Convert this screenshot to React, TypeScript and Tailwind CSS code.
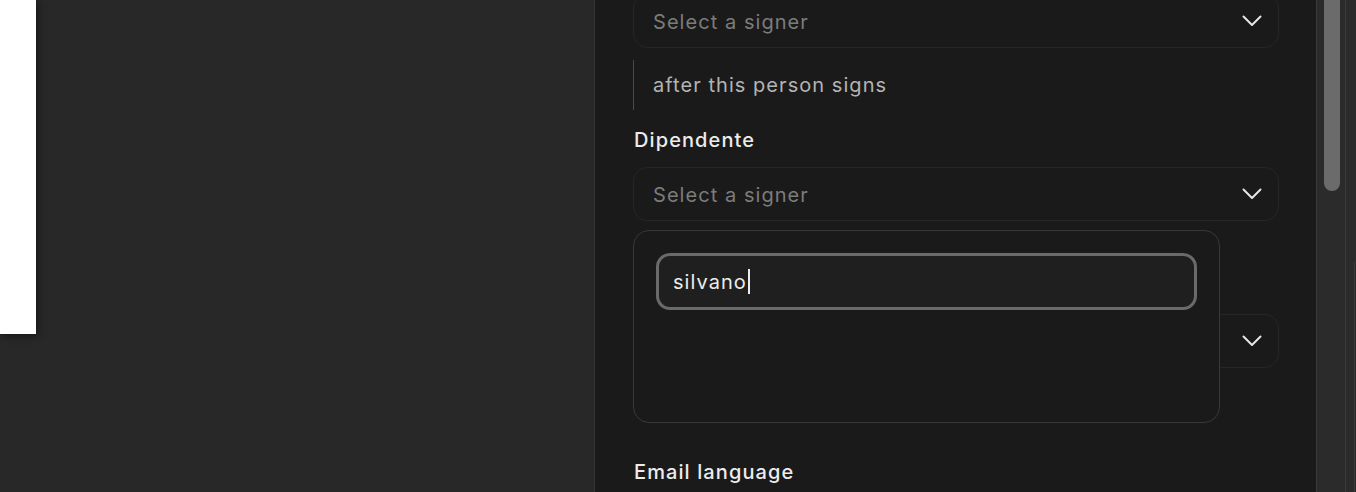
const font = { fontFamily: 'Inter, "Noto Sans", sans-serif' }

function Chevron() {
  return (
    <svg width="20" height="12" viewBox="0 0 20 12" fill="none" className="text-[#e6e6e6]">
      <path d="M1.5 1.5 10 10 18.5 1.5" stroke="currentColor" strokeWidth="2" strokeLinecap="round" strokeLinejoin="round" />
    </svg>
  )
}

function SignerSelect({ className = '' }: { className?: string }) {
  return (
    <div className={`h-[54px] shrink-0 rounded-[14px] border border-[#262626] bg-[#1a1a1a] pl-[19px] pr-[16px] flex items-center justify-between ${className}`}>
      <span className="text-[20px] tracking-[1.05px] text-[#7c7c7c] translate-y-px">Select a signer</span>
      <Chevron />
    </div>
  )
}

export default function App() {
  return (
    <div className="w-[1356px] h-[492px] overflow-hidden flex bg-[#282828]" style={font}>
      {/* canvas side */}
      <div className="w-[594px] shrink-0 relative">
        <div className="w-[36px] h-[334px] bg-white shadow-[2px_2px_8px_rgba(0,0,0,0.45)]" />
      </div>
      <div className="w-px shrink-0 bg-[#333333]" />

      {/* settings panel */}
      <div className="w-[721px] shrink-0 bg-[#1a1a1a] relative pl-[38px] pr-[37px] flex flex-col">
        <SignerSelect className="mt-[-6px]" />

        <div className="mt-[12px] h-[50px] border-l border-[#4a4a4a] pl-[19px] flex items-center">
          <span className="text-[20px] tracking-[1.05px] text-[#b4b4b4]">after this person signs</span>
        </div>

        <div className="mt-[18px] h-6 flex items-center pl-px text-[20px] tracking-[1.1px] font-medium text-[#ececec]">Dipendente</div>
        <SignerSelect className="mt-[15px]" />

        {/* next signer select, its label sits under the popup */}
        <SignerSelect className="mt-[93px]" />

        <div className="mt-[92px] h-6 flex items-center pl-px text-[20px] tracking-[1.1px] font-medium text-[#ececec]">Email language</div>

        {/* combobox popup */}
        <div className="absolute left-[38px] top-[230px] w-[587px] h-[193px] rounded-[16px] border border-[#383838] bg-[#1a1a1a] px-[22px] pt-[22px]">
          <div className="h-[57px] rounded-[14px] border-[3px] border-[#6a6a6a] bg-[#1f1f1f] px-[14px] flex items-center">
            <span className="text-[20px] tracking-[1.05px] text-[#ececec]">silvano</span>
            <span className="ml-px w-[2px] h-[25px] bg-[#ececec]" />
          </div>
        </div>
      </div>

      {/* scrollbar */}
      <div className="flex-1 flex bg-[#2b2b2b] border-l border-[#3a3a3a]">
        <div className="w-[28px] shrink-0 pl-[7px]">
          <div className="w-[16px] h-[191px] rounded-b-full bg-[#6b6b6b]" />
        </div>
        <div className="w-px bg-[#3c3c3c]" />
        <div className="flex-1 flex flex-col items-end pr-[1px]">
          <div className="mt-[262px] w-px flex-1 bg-[#3a3a3a]" />
        </div>
      </div>
    </div>
  )
}
